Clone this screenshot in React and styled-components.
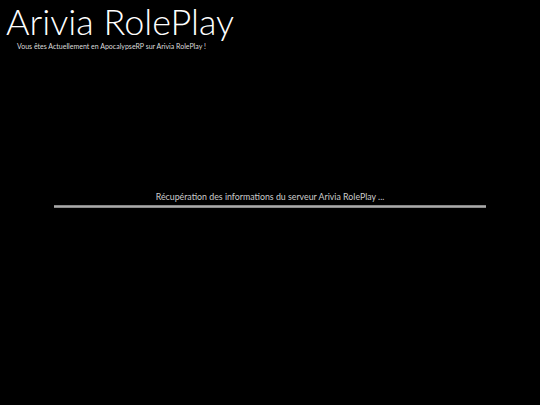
import styled, { createGlobalStyle } from 'styled-components';

const Global = createGlobalStyle`
  html, body { margin: 0; padding: 0; background: #000; }
  body { width: 540px; height: 405px; overflow: hidden; font-family: Lato, "Open Sans", sans-serif; color: #fff; }
`;

const Page = styled.div`
  height: 405px;
  display: flex;
  flex-direction: column;
  background: #000;
`;

const Header = styled.header`
  padding: 0 0 0 6px;
`;

const Title = styled.h1`
  margin: 0;
  font-size: 36px;
  font-weight: 300;
  line-height: 43px;
  color: #fff;
`;

const Subtitle = styled.p`
  margin: -1px 0 0 11px;
  font-size: 7px;
  line-height: 9px;
  color: #ddd;
`;

const Loader = styled.div`
  margin: 140px auto 0;
  width: 432px;
  display: flex;
  flex-direction: column;
  align-items: center;
  gap: 3px;
`;

const Status = styled.div`
  font-size: 8.8px;
  line-height: 11px;
  color: #ccc;
`;

const Bar = styled.div`
  width: 100%;
  height: 3px;
  background: linear-gradient(#777, #aaa 50%, #777);
`;

export default function App() {
  return (
    <Page>
      <Global />
      <Header>
        <Title>Arivia RolePlay</Title>
        <Subtitle>Vous êtes Actuellement en ApocalypseRP sur Arivia RolePlay !</Subtitle>
      </Header>
      <Loader>
        <Status>Récupération des informations du serveur Arivia RolePlay ...</Status>
        <Bar />
      </Loader>
    </Page>
  );
}
